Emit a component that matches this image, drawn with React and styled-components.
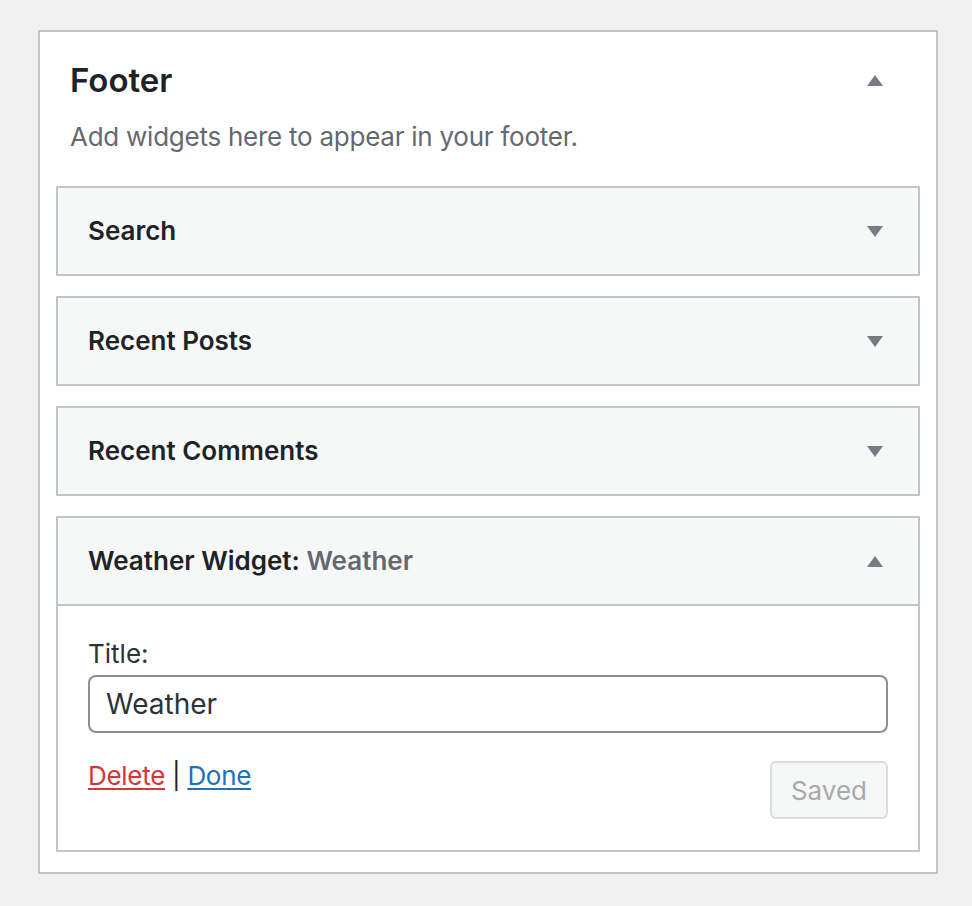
import React from 'react';
import styled, { createGlobalStyle } from 'styled-components';

const GlobalStyle = createGlobalStyle`
  body {
    margin: 0;
    background: #f0f0f1;
    font-family: Inter, "Noto Sans", sans-serif;
    color: #1d2327;
  }
`;

const Page = styled.div`
  padding: 30px 0 32px 38px;
`;

const Panel = styled.section`
  width: 900px;
  box-sizing: border-box;
  background: #fff;
  border: 2px solid #c3c4c7;
  padding: 26px 16px 20px;
`;

const PanelHead = styled.div`
  display: flex;
  align-items: center;
  justify-content: space-between;
  padding: 0 37px 0 14px;
`;

const Heading = styled.h2`
  margin: 0;
  font-size: 33px;
  line-height: 44px;
  font-weight: 600;
`;

const Description = styled.p`
  margin: 17px 0 31px 14px;
  font-size: 26px;
  line-height: 36px;
  letter-spacing: -0.25px;
  color: #646970;
`;

const WidgetList = styled.div`
  display: flex;
  flex-direction: column;
  gap: 20px;
`;

const Widget = styled.div`
  border: 2px solid #c3c4c7;
  background: #fff;
`;

const WidgetHead = styled.div`
  height: 86px;
  display: flex;
  align-items: center;
  justify-content: space-between;
  padding: 0 35px 0 30px;
  background: #f6f7f7;
  border-bottom: ${(p) => (p.$open ? '2px solid #c3c4c7' : 'none')};
`;

const WidgetTitle = styled.h3`
  margin: 0;
  font-size: 26px;
  line-height: 36px;
  font-weight: 600;
`;

const InTitle = styled.span`
  color: #646970;
`;

const Arrow = styled.svg`
  display: block;
  width: 16px;
  height: 11px;
  fill: #787c82;
`;

const WidgetBody = styled.div`
  padding: 30px 30px 31px;
`;

const Label = styled.label`
  display: block;
  font-size: 26px;
  line-height: 36px;
  color: #2c3338;
`;

const Input = styled.input`
  display: block;
  width: 100%;
  height: 58px;
  box-sizing: border-box;
  margin-top: 3px;
  padding: 0 16px;
  border: 2px solid #8c8f94;
  border-radius: 8px;
  font-family: inherit;
  font-size: 28px;
  color: #2c3338;
  background: #fff;
  outline: none;
`;

const Actions = styled.div`
  display: flex;
  align-items: flex-start;
  justify-content: space-between;
  margin-top: 28px;
`;

const Links = styled.div`
  font-size: 26px;
  line-height: 30px;
  letter-spacing: -0.3px;
  color: #1d2327;
`;

const Link = styled.a`
  color: ${(p) => p.$color};
  text-decoration: underline;
  text-underline-offset: 3px;
  text-decoration-thickness: 2px;
  cursor: pointer;
`;

const SaveButton = styled.button`
  height: 58px;
  padding: 0 19px;
  border: 2px solid #dcdcde;
  border-radius: 6px;
  background: #f6f7f7;
  color: #a7aaad;
  font-family: inherit;
  font-size: 26px;
`;

function Toggle({ up }) {
  return (
    <Arrow viewBox="0 0 16 11">
      {up ? <polygon points="8,0 16,11 0,11" /> : <polygon points="0,0 16,0 8,11" />}
    </Arrow>
  );
}

const widgets = ['Search', 'Recent Posts', 'Recent Comments'];

export default function App() {
  return (
    <Page>
      <GlobalStyle />
      <Panel>
        <PanelHead>
          <Heading>Footer</Heading>
          <Toggle up />
        </PanelHead>
        <Description>Add widgets here to appear in your footer.</Description>
        <WidgetList>
          {widgets.map((name) => (
            <Widget key={name}>
              <WidgetHead>
                <WidgetTitle>{name}</WidgetTitle>
                <Toggle />
              </WidgetHead>
            </Widget>
          ))}
          <Widget>
            <WidgetHead $open>
              <WidgetTitle>
                Weather Widget<span>:</span> <InTitle>Weather</InTitle>
              </WidgetTitle>
              <Toggle up />
            </WidgetHead>
            <WidgetBody>
              <Label htmlFor="weather-title">Title:</Label>
              <Input id="weather-title" defaultValue="Weather" />
              <Actions>
                <Links>
                  <Link $color="#d63638">Delete</Link> | <Link $color="#2271b1">Done</Link>
                </Links>
                <SaveButton disabled>Saved</SaveButton>
              </Actions>
            </WidgetBody>
          </Widget>
        </WidgetList>
      </Panel>
    </Page>
  );
}
